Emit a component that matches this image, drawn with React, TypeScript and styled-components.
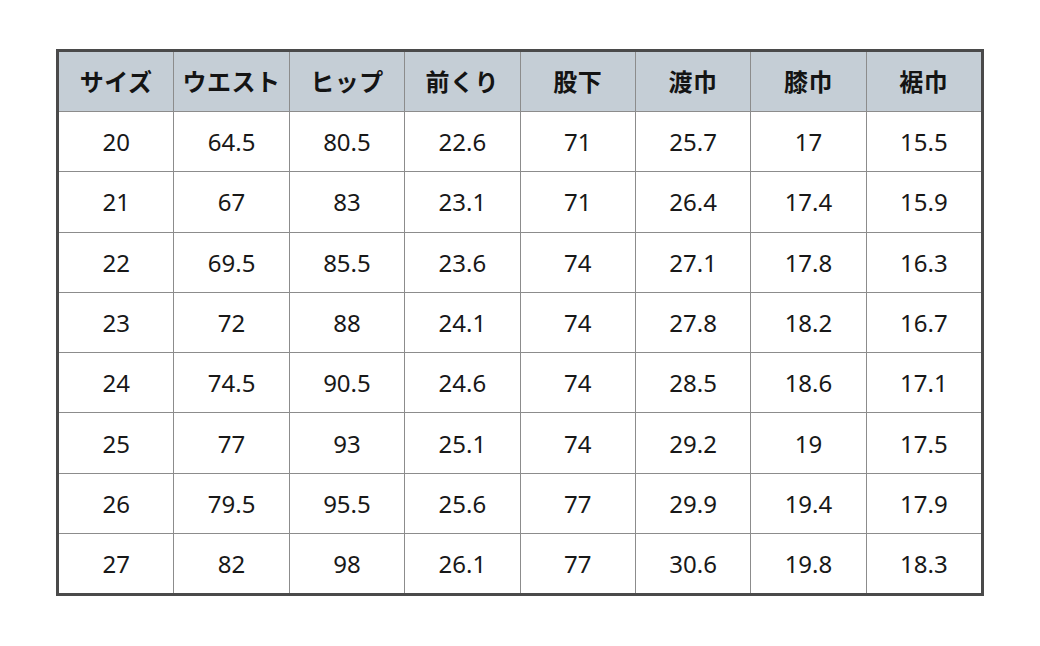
import styled, { createGlobalStyle } from "styled-components";

const GlobalStyle = createGlobalStyle`
  html, body {
    margin: 0;
    padding: 0;
    background: #ffffff;
  }
  body {
    font-family: "Noto Sans", "Noto Sans CJK JP", sans-serif;
    color: #161616;
  }
`;

const Page = styled.div`
  width: 1040px;
  height: 646px;
  padding: 49px 0 0 56px;
  box-sizing: border-box;
`;

const Grid = styled.div`
  width: 928px;
  box-sizing: border-box;
  display: grid;
  grid-template-columns: repeat(8, 1fr);
  grid-template-rows: 59px repeat(8, 59.3px);
  gap: 1px;
  background: #8c8c8c;
  border: 3px solid #4a4a4a;
`;

const HeadCell = styled.div`
  background: #c5ced6;
  display: flex;
  align-items: center;
  justify-content: center;
  padding-bottom: 3px;
  font-family: "Noto Sans CJK JP", sans-serif;
  font-weight: 700;
  font-size: 24px;
  letter-spacing: 0.5px;
  color: #141414;
`;

const Cell = styled.div`
  background: #ffffff;
  display: flex;
  align-items: center;
  justify-content: center;
  font-size: 24px;
  color: #181818;
`;

const headers = ["サイズ", "ウエスト", "ヒップ", "前くり", "股下", "渡巾", "膝巾", "裾巾"];

const rows = [
  ["20", "64.5", "80.5", "22.6", "71", "25.7", "17", "15.5"],
  ["21", "67", "83", "23.1", "71", "26.4", "17.4", "15.9"],
  ["22", "69.5", "85.5", "23.6", "74", "27.1", "17.8", "16.3"],
  ["23", "72", "88", "24.1", "74", "27.8", "18.2", "16.7"],
  ["24", "74.5", "90.5", "24.6", "74", "28.5", "18.6", "17.1"],
  ["25", "77", "93", "25.1", "74", "29.2", "19", "17.5"],
  ["26", "79.5", "95.5", "25.6", "77", "29.9", "19.4", "17.9"],
  ["27", "82", "98", "26.1", "77", "30.6", "19.8", "18.3"],
];

const App = () => {
  return (
    <>
      <GlobalStyle />
      <Page>
        <Grid>
          {headers.map((h) => (
            <HeadCell key={h}>{h}</HeadCell>
          ))}
          {rows.map((row, i) =>
            row.map((v, j) => <Cell key={`${i}-${j}`}>{v}</Cell>)
          )}
        </Grid>
      </Page>
    </>
  );
};

export default App;
